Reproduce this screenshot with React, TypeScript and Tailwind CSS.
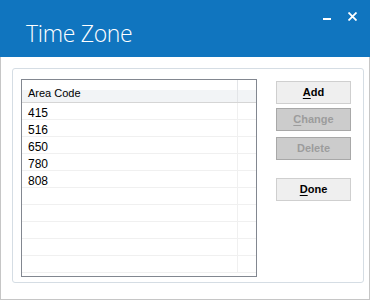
import React from "react";

// 一覧に表示するエリアコード
const codes = ["415", "516", "650", "780", "808"];
const emptyRows = 5;

type BtnProps = {
  label: string;
  hotkey?: number;
  disabled?: boolean;
  className?: string;
};

function DlgButton({ label, hotkey, disabled, className = "" }: BtnProps) {
  const base = disabled
    ? "bg-[#cccccc] border-[#a8a8a8] text-[#9c9c9c]"
    : "bg-[#efefef] border-[#cfcfcf] text-black";
  return (
    <button
      type="button"
      disabled={disabled}
      className={`w-[75px] h-[23px] border text-[11px] font-bold leading-none ${base} ${className}`}
    >
      {hotkey === undefined ? (
        label
      ) : (
        <>
          {label.slice(0, hotkey)}
          <span className="underline underline-offset-2">{label[hotkey]}</span>
          {label.slice(hotkey + 1)}
        </>
      )}
    </button>
  );
}

export default function App() {
  return (
    <div className="w-[370px] h-[300px] flex flex-col bg-white font-['Liberation_Sans',Arial,sans-serif]">
      {/* タイトルバー */}
      <div className="h-[57px] bg-[#1075bf] flex items-start justify-between shrink-0">
        <div className="pl-[26px] pt-[19px] text-[23px] leading-[28px] font-light text-white font-['Open_Sans','Noto_Sans',sans-serif] tracking-[-0.3px]">
          Time Zone
        </div>
        <div className="flex items-start pt-[12px] pr-[13px]">
          <div className="w-[8px] h-[2px] bg-white mt-[6px] mr-[17px]" />
          <svg width="9" height="9" viewBox="0 0 9 9" className="block">
            <path d="M0.5 0.5 L8.5 8.5 M8.5 0.5 L0.5 8.5" stroke="white" strokeWidth="1.8" />
          </svg>
        </div>
      </div>

      {/* 本体 */}
      <div className="flex-1 border-x border-b border-[#c6c6c6] pl-[11px] pr-[5px] pt-[11px] pb-[16px]">
        <div className="h-[215px] border border-[#d5dde4] rounded-[3px] flex pl-[8px] pt-[10px]">
          {/* リスト */}
          <div className="w-[236px] h-[198px] border border-[#828790] bg-white overflow-hidden">
            <div className="h-[23px] flex border-b border-[#d5d5d5] bg-[linear-gradient(#ffffff_0%,#ffffff_45%,#f2f4f6_45%,#f2f4f6_100%)]">
              <div className="w-[216px] border-r border-[#e3e5e8] pl-[6px] pt-[7px] text-[11px] leading-[12px] text-black">
                Area Code
              </div>
            </div>
            {codes.map((c) => (
              <div key={c} className="h-[17px] flex border-b border-[#f0f0f0]">
                <div className="w-[216px] border-r border-[#f0f0f0] pl-[6px] pt-[4px] text-[12px] leading-[12px] text-black">
                  {c}
                </div>
              </div>
            ))}
            {Array.from({ length: emptyRows }).map((_, i) => (
              <div key={i} className="h-[17px] flex border-b border-[#f0f0f0]">
                <div className="w-[216px] border-r border-[#f0f0f0]" />
              </div>
            ))}
          </div>

          {/* ボタン */}
          <div className="flex flex-col ml-[19px] pt-[2px]">
            <DlgButton label="Add" hotkey={0} />
            <DlgButton label="Change" hotkey={0} disabled className="mt-[4px]" />
            <DlgButton label="Delete" disabled className="mt-[6px]" />
            <DlgButton label="Done" hotkey={0} className="mt-[18px]" />
          </div>
        </div>
      </div>
    </div>
  );
}
